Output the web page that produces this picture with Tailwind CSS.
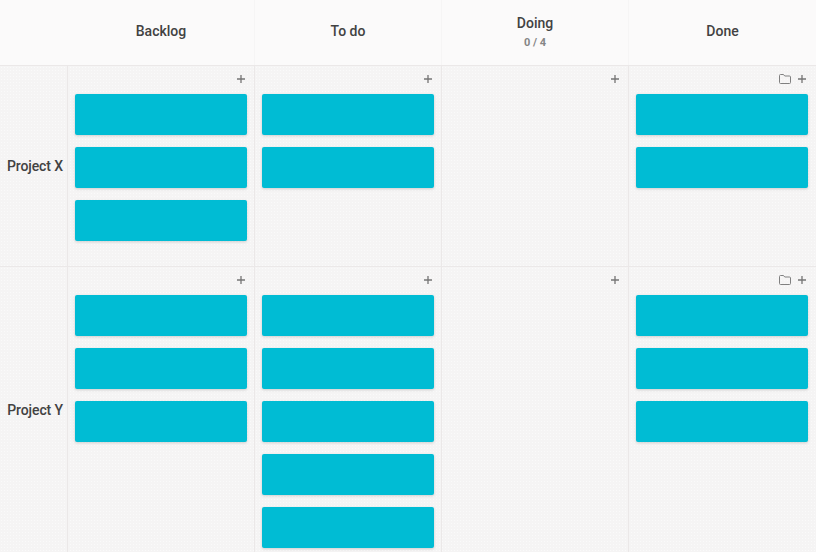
<!DOCTYPE html>
<html lang="en">
<head>
  <meta charset="UTF-8">
  <title>Kanban board</title>
  <script src="https://cdn.jsdelivr.net/npm/@tailwindcss/browser@4"></script>
</head>
<body class="bg-[#f5f4f4] font-['Roboto',sans-serif] text-[#424242]">
  <div class="w-[816px] h-[552px] overflow-hidden bg-[radial-gradient(#fafafa_0.7px,transparent_0.8px)] bg-size-[3px_3px]">
    <!-- header -->
    <div class="grid grid-cols-[68px_187px_187px_187px_187px] h-[66px] bg-[#fbfafa] border-b border-[#ebe8e8] text-sm font-medium">
      <div></div>
      <div class="flex items-center justify-center border-r border-[#f6f5f5] pb-[4px]">Backlog</div>
      <div class="flex items-center justify-center border-r border-[#f6f5f5] pb-[4px]">To do</div>
      <div class="flex flex-col items-center justify-center border-r border-[#f6f5f5] pb-[1px]">
        <span>Doing</span>
        <span class="mt-[2px] text-[11px] leading-[16px] font-bold text-[#858585]">0 / 4</span>
      </div>
      <div class="flex items-center justify-center pb-[4px]">Done</div>
    </div>

    <!-- Project X -->
    <div class="grid grid-cols-[68px_187px_187px_187px_187px] h-[201px] border-b border-[#ebe8e8]">
      <div class="flex items-center justify-end pr-[4px] border-r border-[#ebe8e8] text-sm font-medium tracking-[-0.1px]">Project X</div>
      <div class="border-r border-[#ebe8e8] px-[7px]">
        <div class="h-[28px] flex items-center justify-end pr-[2px] pb-[2px]">
          <svg class="w-[8px] h-[8px] text-[#757575]" viewBox="0 0 8 8" fill="none" stroke="currentColor" stroke-width="1.3"><path d="M4 0v8M0 4h8"/></svg>
        </div>
        <div class="flex flex-col gap-[12px]">
          <div class="h-[41px] rounded-[2px] bg-[#00bcd4] shadow-[0_1px_3px_rgba(0,0,0,0.16)]"></div>
          <div class="h-[41px] rounded-[2px] bg-[#00bcd4] shadow-[0_1px_3px_rgba(0,0,0,0.16)]"></div>
          <div class="h-[41px] rounded-[2px] bg-[#00bcd4] shadow-[0_1px_3px_rgba(0,0,0,0.16)]"></div>
        </div>
      </div>
      <div class="border-r border-[#ebe8e8] px-[7px]">
        <div class="h-[28px] flex items-center justify-end pr-[2px] pb-[2px]">
          <svg class="w-[8px] h-[8px] text-[#757575]" viewBox="0 0 8 8" fill="none" stroke="currentColor" stroke-width="1.3"><path d="M4 0v8M0 4h8"/></svg>
        </div>
        <div class="flex flex-col gap-[12px]">
          <div class="h-[41px] rounded-[2px] bg-[#00bcd4] shadow-[0_1px_3px_rgba(0,0,0,0.16)]"></div>
          <div class="h-[41px] rounded-[2px] bg-[#00bcd4] shadow-[0_1px_3px_rgba(0,0,0,0.16)]"></div>
        </div>
      </div>
      <div class="border-r border-[#ebe8e8] px-[7px]">
        <div class="h-[28px] flex items-center justify-end pr-[2px] pb-[2px]">
          <svg class="w-[8px] h-[8px] text-[#757575]" viewBox="0 0 8 8" fill="none" stroke="currentColor" stroke-width="1.3"><path d="M4 0v8M0 4h8"/></svg>
        </div>
      </div>
      <div class="pl-[7px] pr-[8px]">
        <div class="h-[28px] flex items-center justify-end gap-[7px] pr-[2px] pb-[2px]">
          <svg class="w-[12px] h-[10px] text-[#808080]" viewBox="0 0 12 10" fill="none" stroke="currentColor" stroke-width="1"><path d="M1.5 0.5h3l1.2 1.5h4.8a1 1 0 0 1 1 1v5.5a1 1 0 0 1-1 1h-9a1 1 0 0 1-1-1v-7a1 1 0 0 1 1-1z"/></svg>
          <svg class="w-[8px] h-[8px] text-[#757575]" viewBox="0 0 8 8" fill="none" stroke="currentColor" stroke-width="1.3"><path d="M4 0v8M0 4h8"/></svg>
        </div>
        <div class="flex flex-col gap-[12px]">
          <div class="h-[41px] rounded-[2px] bg-[#00bcd4] shadow-[0_1px_3px_rgba(0,0,0,0.16)]"></div>
          <div class="h-[41px] rounded-[2px] bg-[#00bcd4] shadow-[0_1px_3px_rgba(0,0,0,0.16)]"></div>
        </div>
      </div>
    </div>

    <!-- Project Y -->
    <div class="grid grid-cols-[68px_187px_187px_187px_187px] h-[286px]">
      <div class="flex items-center justify-end pr-[4px] border-r border-[#ebe8e8] text-sm font-medium tracking-[-0.1px]">Project Y</div>
      <div class="border-r border-[#ebe8e8] px-[7px]">
        <div class="h-[28px] flex items-center justify-end pr-[2px] pb-[2px]">
          <svg class="w-[8px] h-[8px] text-[#757575]" viewBox="0 0 8 8" fill="none" stroke="currentColor" stroke-width="1.3"><path d="M4 0v8M0 4h8"/></svg>
        </div>
        <div class="flex flex-col gap-[12px]">
          <div class="h-[41px] rounded-[2px] bg-[#00bcd4] shadow-[0_1px_3px_rgba(0,0,0,0.16)]"></div>
          <div class="h-[41px] rounded-[2px] bg-[#00bcd4] shadow-[0_1px_3px_rgba(0,0,0,0.16)]"></div>
          <div class="h-[41px] rounded-[2px] bg-[#00bcd4] shadow-[0_1px_3px_rgba(0,0,0,0.16)]"></div>
        </div>
      </div>
      <div class="border-r border-[#ebe8e8] px-[7px]">
        <div class="h-[28px] flex items-center justify-end pr-[2px] pb-[2px]">
          <svg class="w-[8px] h-[8px] text-[#757575]" viewBox="0 0 8 8" fill="none" stroke="currentColor" stroke-width="1.3"><path d="M4 0v8M0 4h8"/></svg>
        </div>
        <div class="flex flex-col gap-[12px]">
          <div class="h-[41px] rounded-[2px] bg-[#00bcd4] shadow-[0_1px_3px_rgba(0,0,0,0.16)]"></div>
          <div class="h-[41px] rounded-[2px] bg-[#00bcd4] shadow-[0_1px_3px_rgba(0,0,0,0.16)]"></div>
          <div class="h-[41px] rounded-[2px] bg-[#00bcd4] shadow-[0_1px_3px_rgba(0,0,0,0.16)]"></div>
          <div class="h-[41px] rounded-[2px] bg-[#00bcd4] shadow-[0_1px_3px_rgba(0,0,0,0.16)]"></div>
          <div class="h-[41px] rounded-[2px] bg-[#00bcd4] shadow-[0_1px_3px_rgba(0,0,0,0.16)]"></div>
        </div>
      </div>
      <div class="border-r border-[#ebe8e8] px-[7px]">
        <div class="h-[28px] flex items-center justify-end pr-[2px] pb-[2px]">
          <svg class="w-[8px] h-[8px] text-[#757575]" viewBox="0 0 8 8" fill="none" stroke="currentColor" stroke-width="1.3"><path d="M4 0v8M0 4h8"/></svg>
        </div>
      </div>
      <div class="pl-[7px] pr-[8px]">
        <div class="h-[28px] flex items-center justify-end gap-[7px] pr-[2px] pb-[2px]">
          <svg class="w-[12px] h-[10px] text-[#808080]" viewBox="0 0 12 10" fill="none" stroke="currentColor" stroke-width="1"><path d="M1.5 0.5h3l1.2 1.5h4.8a1 1 0 0 1 1 1v5.5a1 1 0 0 1-1 1h-9a1 1 0 0 1-1-1v-7a1 1 0 0 1 1-1z"/></svg>
          <svg class="w-[8px] h-[8px] text-[#757575]" viewBox="0 0 8 8" fill="none" stroke="currentColor" stroke-width="1.3"><path d="M4 0v8M0 4h8"/></svg>
        </div>
        <div class="flex flex-col gap-[12px]">
          <div class="h-[41px] rounded-[2px] bg-[#00bcd4] shadow-[0_1px_3px_rgba(0,0,0,0.16)]"></div>
          <div class="h-[41px] rounded-[2px] bg-[#00bcd4] shadow-[0_1px_3px_rgba(0,0,0,0.16)]"></div>
          <div class="h-[41px] rounded-[2px] bg-[#00bcd4] shadow-[0_1px_3px_rgba(0,0,0,0.16)]"></div>
        </div>
      </div>
    </div>
  </div>
</body>
</html>
